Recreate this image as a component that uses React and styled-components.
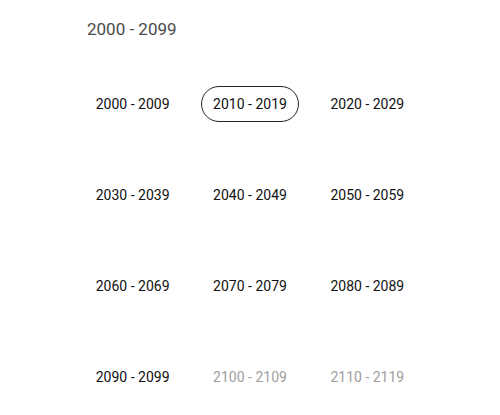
import React from 'react';
import styled, { createGlobalStyle } from 'styled-components';

const GlobalStyle = createGlobalStyle`
  body {
    margin: 0;
    background: #ffffff;
    font-family: Roboto, "Liberation Sans", sans-serif;
  }
`;

// Decade picker panel
const Panel = styled.div`
  width: 352px;
  margin-left: 74px;
`;

const Header = styled.div`
  height: 58px;
  padding-left: 13px;
  display: flex;
  align-items: center;
  font-size: 17px;
  color: #4a4a4a;
`;

const Grid = styled.div`
  display: grid;
  grid-template-columns: repeat(3, 1fr);
  grid-auto-rows: 91px;
  align-items: center;
  justify-items: center;
`;

const Decade = styled.button`
  width: 98px;
  height: 36px;
  padding: 0;
  border: 1px solid ${(p) => (p.$selected ? '#222' : 'transparent')};
  border-radius: 18px;
  background: transparent;
  font-family: Roboto, "Liberation Sans", sans-serif;
  font-size: 14px;
  color: ${(p) => (p.$outside ? '#9e9e9e' : '#111')};
  cursor: pointer;
`;

const decades = Array.from({ length: 12 }, (_, i) => 2000 + i * 10);

const App = () => (
  <>
    <GlobalStyle />
    <Panel>
      <Header>2000 - 2099</Header>
      <Grid>
        {decades.map((d) => (
          <Decade key={d} $selected={d === 2010} $outside={d >= 2100}>
            {d} - {d + 9}
          </Decade>
        ))}
      </Grid>
    </Panel>
  </>
);

export default App;
